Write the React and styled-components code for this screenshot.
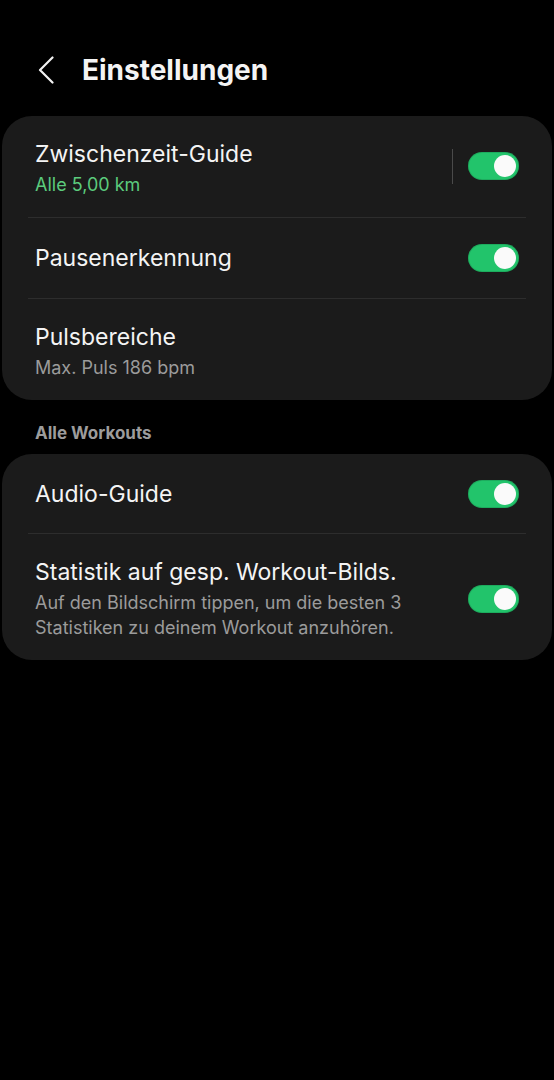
import React, { useState } from 'react'
import styled, { createGlobalStyle } from 'styled-components'

const GlobalStyle = createGlobalStyle`
  body {
    margin: 0;
    background: #000;
    font-family: Inter, Roboto, 'Noto Sans', sans-serif;
    color: #f2f2f2;
  }
`

const Page = styled.div`
  min-height: 1080px;
  background: #000;
`

const Header = styled.header`
  display: flex;
  align-items: center;
  height: 44px;
  padding: 48px 0 24px 36px;
`

const BackButton = styled.button`
  display: flex;
  align-items: center;
  justify-content: center;
  width: 20px;
  height: 44px;
  padding: 0;
  margin-right: 26px;
  background: none;
  border: none;
  cursor: pointer;
`

const Title = styled.h1`
  margin: 0;
  font-size: 28px;
  font-weight: 700;
  color: #f4f4f4;
`

const Card = styled.section`
  margin: 0 2px;
  padding: 0 26px;
  background: #1b1b1b;
  border-radius: 30px;
`

const Row = styled.div`
  display: flex;
  align-items: center;
  min-height: ${p => p.$height || 79}px;
  padding: ${p => (p.$multi ? '23px 7px 20px' : '0 7px')};
  box-sizing: border-box;
  border-top: ${p => (p.$first ? 'none' : '1px solid #2d2d2d')};
`

const Texts = styled.div`
  flex: 1;
  display: flex;
  flex-direction: column;
`

const Label = styled.span`
  font-size: 23px;
  line-height: 30px;
  color: #f4f4f4;
`

const Sub = styled.span`
  margin-top: 3px;
  font-size: 18px;
  line-height: 25px;
  color: ${p => (p.$accent ? '#5ccb7d' : '#9b9b9b')};
`

const Separator = styled.div`
  width: 1px;
  height: 35px;
  background: #4a4a4a;
  margin: 0 15px 4px 0;
`

const Track = styled.button`
  position: relative;
  flex: none;
  width: 51px;
  height: 28px;
  margin-bottom: ${p => p.$lift || 0}px;
  padding: 0;
  border: none;
  border-radius: 14px;
  background: ${p => (p.$on ? '#22c46b' : '#555')};
  box-shadow: inset 0 0 0 1px rgba(0, 0, 0, 0.12);
  cursor: pointer;
`

const Knob = styled.span`
  position: absolute;
  top: 3px;
  left: ${p => (p.$on ? '26px' : '3px')};
  width: 22px;
  height: 22px;
  border-radius: 50%;
  background: #fafafa;
`

const SectionLabel = styled.h2`
  margin: 0;
  padding: 22px 35px 10px;
  font-size: 17px;
  line-height: 22px;
  font-weight: 700;
  color: #9c9c9c;
`

const Toggle = ({ initial = true, lift }) => {
  const [on, setOn] = useState(initial)
  return (
    <Track $on={on} $lift={lift} onClick={() => setOn(!on)}>
      <Knob $on={on} />
    </Track>
  )
}

const App = () => (
  <Page>
    <GlobalStyle />
    <Header>
      <BackButton aria-label='Zurück'>
        <svg width='16' height='28' viewBox='0 0 16 28'>
          <path d='M14.5 1.5 L2 14 L14.5 26.5' fill='none' stroke='#f2f2f2' strokeWidth='2.2' strokeLinecap='round' strokeLinejoin='round' />
        </svg>
      </BackButton>
      <Title>Einstellungen</Title>
    </Header>

    <Card>
      <Row $first $multi $height={100}>
        <Texts>
          <Label>Zwischenzeit-Guide</Label>
          <Sub $accent>Alle 5,00 km</Sub>
        </Texts>
        <Separator />
        <Toggle lift={4} />
      </Row>
      <Row $height={81}>
        <Texts>
          <Label>Pausenerkennung</Label>
        </Texts>
        <Toggle />
      </Row>
      <Row $multi $height={100}>
        <Texts>
          <Label>Pulsbereiche</Label>
          <Sub>Max. Puls 186 bpm</Sub>
        </Texts>
      </Row>
    </Card>

    <SectionLabel>Alle Workouts</SectionLabel>

    <Card>
      <Row $first $height={79}>
        <Texts>
          <Label>Audio-Guide</Label>
        </Texts>
        <Toggle />
      </Row>
      <Row $multi $height={125}>
        <Texts>
          <Label>Statistik auf gesp. Workout-Bilds.</Label>
          <Sub>
            Auf den Bildschirm tippen, um die besten 3<br />
            Statistiken zu deinem Workout anzuhören.
          </Sub>
        </Texts>
        <Toggle />
      </Row>
    </Card>
  </Page>
)

export default App
